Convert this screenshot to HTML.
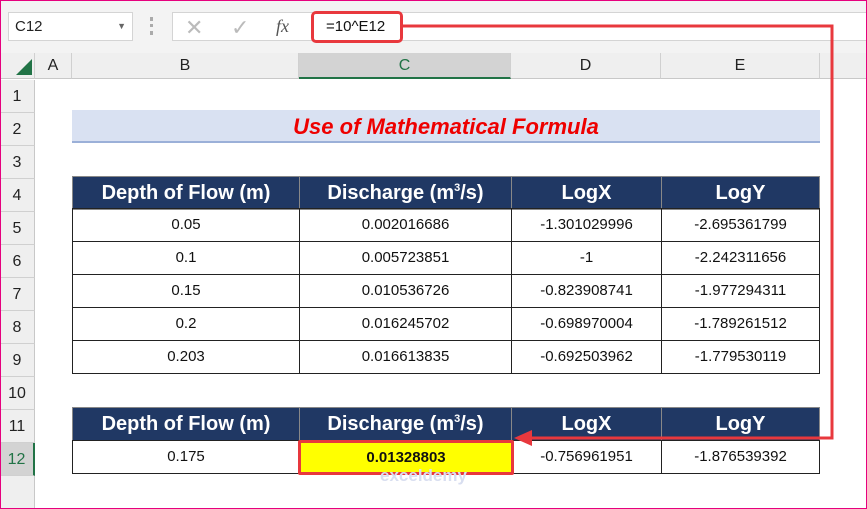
<!DOCTYPE html>
<html><head><style>
*{margin:0;padding:0;box-sizing:border-box}
body{width:867px;height:509px;overflow:hidden;background:#fff;font-family:"Liberation Sans",Calibri,sans-serif;position:relative}
.frame{position:absolute;left:0;top:0;width:867px;height:509px;border:1px solid #e6007e;pointer-events:none;z-index:10}
.top{position:absolute;left:0;top:0;width:867px;height:53px;background:#f3f3f3}
.nb{position:absolute;left:8px;top:12px;width:125px;height:29px;background:#fff;border:1px solid #d4d4d4;font-size:15px;line-height:27px;padding-left:6px;color:#222}
.fb{position:absolute;left:172px;top:12px;width:695px;height:29px;background:#fff;border:1px solid #d4d4d4}
.ch{position:absolute;top:53px;height:26px;background:#efefef;border-right:1px solid #d0d0d0;border-bottom:1px solid #c8c8c8;text-align:center;font-size:16px;line-height:26px;color:#222}
.rh{position:absolute;left:0;width:35px;height:33px;background:#efefef;border-bottom:1px solid #d0d0d0;border-right:1px solid #c8c8c8;text-align:center;font-size:16px;line-height:33px;color:#222}
.c{position:absolute;height:34px;text-align:center;font-size:15px;line-height:32px;border:1px solid #222;color:#111}
.h{background:#203864;color:#fff;font-weight:bold;font-size:20px;border-color:#888}
.sup{font-size:11px;position:relative;top:-8px;line-height:0}
</style></head><body>
<div class="top"></div>
<div class="nb">C12<span style="position:absolute;right:6px;top:0;font-size:9px;color:#666">▼</span></div>
<div style="position:absolute;left:150px;top:17px;width:3px;height:18px;border-left:3px dotted #aaa"></div>
<div class="fb">
<span style="position:absolute;left:12px;top:2px;font-size:22px;color:#bbb">✕</span>
<span style="position:absolute;left:58px;top:2px;font-size:22px;color:#bbb">✓</span>
<span style="position:absolute;left:103px;top:3px;font-size:18px;color:#555;font-style:italic;font-family:'Liberation Serif',serif">fx</span>
</div>
<div style="position:absolute;left:311px;top:11px;width:92px;height:32px;border:3px solid #e8383d;border-radius:5px;background:#fff;font-size:15px;line-height:26px;padding-left:12px;color:#111">=10^E12</div>
<div class="ch" style="left:0;width:35px"></div>
<svg style="position:absolute;left:15px;top:58px" width="18" height="18"><polygon points="17,1 17,17 1,17" fill="#217346"/></svg>
<div class="ch" style="left:35px;width:37px">A</div>
<div class="ch" style="left:72px;width:227px">B</div>
<div class="ch" style="left:299px;width:212px;background:#d3d3d3;color:#217346;border-bottom:2px solid #217346">C</div>
<div class="ch" style="left:511px;width:150px">D</div>
<div class="ch" style="left:661px;width:159px">E</div>
<div class="ch" style="left:820px;width:47px"></div>
<div class="rh" style="top:80px">1</div><div class="rh" style="top:113px">2</div><div class="rh" style="top:146px">3</div><div class="rh" style="top:179px">4</div><div class="rh" style="top:212px">5</div><div class="rh" style="top:245px">6</div><div class="rh" style="top:278px">7</div><div class="rh" style="top:311px">8</div><div class="rh" style="top:344px">9</div><div class="rh" style="top:377px">10</div><div class="rh" style="top:410px">11</div><div class="rh" style="top:443px;background:#d3d3d3;color:#217346;border-right:2px solid #217346">12</div>
<div class="rh" style="top:476px;height:33px"></div>
<div style="position:absolute;left:72px;top:110px;width:748px;height:33px;background:#d9e1f2;border-bottom:2px solid #9bb0d8;text-align:center;color:#e00;font-weight:bold;font-style:italic;font-size:22px;line-height:33px">Use of Mathematical Formula</div>

<div class="c h" style="left:72px;top:176px;width:228px">Depth of Flow (m)</div>
<div class="c h" style="left:299px;top:176px;width:213px">Discharge (m<span class="sup">3</span>/s)</div>
<div class="c h" style="left:511px;top:176px;width:151px">LogX</div>
<div class="c h" style="left:661px;top:176px;width:159px">LogY</div>

<div class="c" style="left:72px;top:208px;width:228px">0.05</div><div class="c" style="left:299px;top:208px;width:213px">0.002016686</div><div class="c" style="left:511px;top:208px;width:151px">-1.301029996</div><div class="c" style="left:661px;top:208px;width:159px">-2.695361799</div>
<div class="c" style="left:72px;top:241px;width:228px">0.1</div><div class="c" style="left:299px;top:241px;width:213px">0.005723851</div><div class="c" style="left:511px;top:241px;width:151px">-1</div><div class="c" style="left:661px;top:241px;width:159px">-2.242311656</div>
<div class="c" style="left:72px;top:274px;width:228px">0.15</div><div class="c" style="left:299px;top:274px;width:213px">0.010536726</div><div class="c" style="left:511px;top:274px;width:151px">-0.823908741</div><div class="c" style="left:661px;top:274px;width:159px">-1.977294311</div>
<div class="c" style="left:72px;top:307px;width:228px">0.2</div><div class="c" style="left:299px;top:307px;width:213px">0.016245702</div><div class="c" style="left:511px;top:307px;width:151px">-0.698970004</div><div class="c" style="left:661px;top:307px;width:159px">-1.789261512</div>
<div class="c" style="left:72px;top:340px;width:228px">0.203</div><div class="c" style="left:299px;top:340px;width:213px">0.016613835</div><div class="c" style="left:511px;top:340px;width:151px">-0.692503962</div><div class="c" style="left:661px;top:340px;width:159px">-1.779530119</div>

<div class="c h" style="left:72px;top:407px;width:228px">Depth of Flow (m)</div>
<div class="c h" style="left:299px;top:407px;width:213px">Discharge (m<span class="sup">3</span>/s)</div>
<div class="c h" style="left:511px;top:407px;width:151px">LogX</div>
<div class="c h" style="left:661px;top:407px;width:159px">LogY</div>
<div class="c" style="left:72px;top:440px;width:228px">0.175</div>
<div class="c" style="left:511px;top:440px;width:151px">-0.756961951</div>
<div class="c" style="left:661px;top:440px;width:159px">-1.876539392</div>
<div style="position:absolute;left:298px;top:440px;width:216px;height:35px;background:#ff0;border:3px solid #e8383d;border-radius:2px;text-align:center;font-weight:bold;font-size:15px;line-height:29px;color:#111">0.01328803</div>
<div style="position:absolute;left:380px;top:466px;font-size:17px;color:#d8def0;font-weight:bold">exceldemy</div>

<svg style="position:absolute;left:0;top:0" width="867" height="509">
<polyline points="403,26 832,26 832,438 530,438" fill="none" stroke="#e8383d" stroke-width="3"/>
<polygon points="514,438 532,430 532,446" fill="#e8383d"/>
</svg>
<div class="frame"></div>
</body></html>
